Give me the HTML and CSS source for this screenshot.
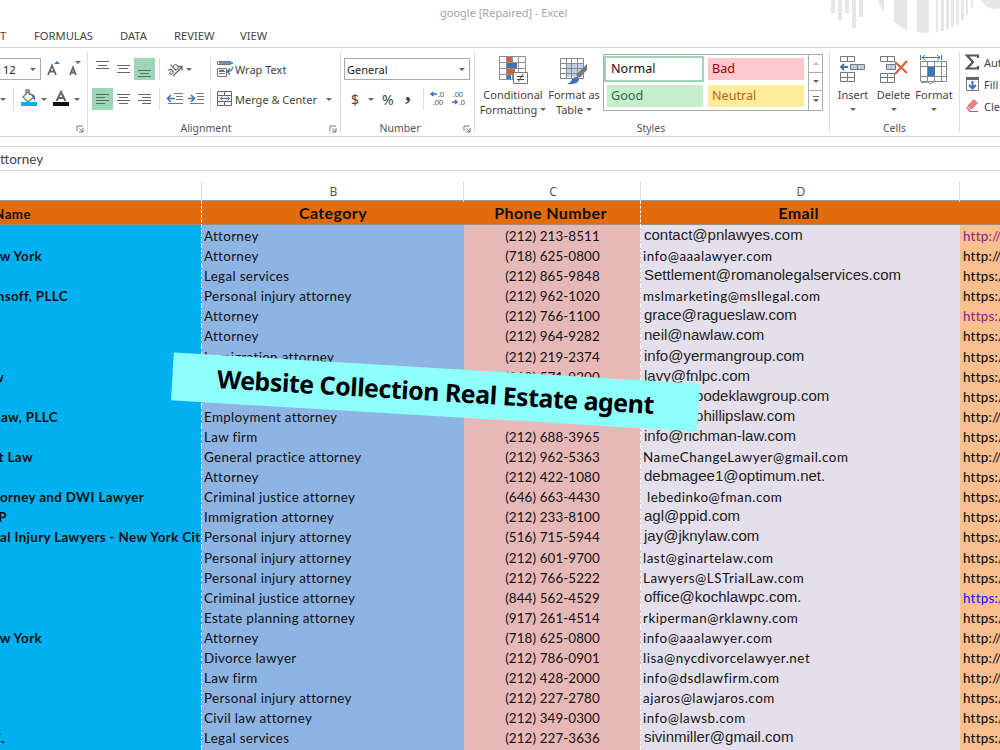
FILE: index.html
```
<!DOCTYPE html>
<html><head>
<meta charset="utf-8">
<title>google [Repaired] - Excel</title>
<link rel="stylesheet" href="styles.css">
</head><body>

<div class="titlebar">google [Repaired] - Excel
<svg class="deco" width="180" height="36"><g fill="#e6e6e6"><path d="M11 0h4v13h-4zM18 0h4v20h-4zM25 0h4v13h-4zM32 0h4v28h-4zM39 0h4v17h-4zM58 0h6v12q-4-5-6-12zM74 0h13v30q-7-3-13-8zM97 0h12v33q-6 0-12-1zM116 0h2v32h-2zM121 0h3v31h-3zM126 0h3v29h-3zM131 0h3v27h-3zM136 0h3v25h-3zM141 0h3v20h-3zM146 0h2v15h-2zM151 0h2v7h-2zM161 0h19v8q-12 4-19-8z"/></g></svg>
</div>
<div class="tabs"><span class="t0">T</span><span class="t1">FORMULAS</span><span class="t2">DATA</span><span class="t3">REVIEW</span><span class="t4">VIEW</span></div>

<div class="ribbon">
<div class="group font">
	<div class="row"><div class="size">12<i class="dd"></i></div>
	<svg width="36" height="22"><g fill="none" stroke="#666" stroke-width="1.8"><path d="M3 17L7 7.500L11 17M4.500 13.500h5"/><path d="M25 17L28 9.500L31 17M26 14.500h4"/></g><path d="M9 6l3-3 3 3zM30 3h6l-3 3z" fill="#3b74b9"/></svg></div>
	<div class="row"><i class="dd d1"></i><i class="sep"></i>
	<svg class="bucket" width="18" height="22"><path d="M3 9l5-5 6 5-6 5zM6 7V2h3v5" fill="none" stroke="#777" stroke-width="1.300"/><path d="M11 6q5 0 4 7l-2-3z" fill="#3b74b9"/><path d="M1 14h16v4H1z" fill="#00b0f0"/></svg><i class="dd d2"></i>
	<svg class="color" width="18" height="22"><path d="M4.500 13L9 4L13.500 13M6 10h6" fill="none" stroke="#666" stroke-width="2"/><path d="M1 14h16v4H1z" fill="#111"/></svg><i class="dd d3"></i></div>
	<div class="label"><svg class="launch" width="8" height="8"><path d="M1 6V1h6M3.500 3.500L7 7M7 3v4H3" fill="none" stroke="#777"/></svg></div>
</div>

<div class="group align">
	<div class="row">
	<svg width="64" height="22"><path d="M43 0h21v22H43z" fill="#9fd5b7"/><path d="M5 3.500h13M7 7.500h9M5 10.500h13M26 7.500h13M28 10.500h9M26 14.500h13M47 12.500h13M49 15.500h9M47 18.500h13" stroke="#666"/></svg>
	<i class="sep s1"></i>
	<svg class="rot" width="20" height="22"><text x="0" y="13" transform="rotate(-42 8 11)">ab</text><path d="M6 18L15 9M11 8.500h4v4" fill="none" stroke="#666" stroke-width="1.300"/></svg><i class="dd"></i>
	<i class="sep s2"></i>
	<svg class="ic" width="18" height="22"><path d="M.5 3.500h13v3H.5zM.5 10.500h9v8h-9zM2 13.500h6M2 15.500h6" stroke="#777" fill="none"/><path d="M2 5h14M2 12.500h5M15.500 9q0 4.500-5 4.500M13 10.500l-3 3 3 3" stroke="#3b74b9" fill="none" stroke-width="1.300"/></svg><span class="wrap">Wrap Text</span></div>
	<div class="row">
	<svg width="64" height="22"><path d="M1 0h21v22H1z" fill="#9fd5b7"/><path d="M5 6.500h13M5 9.500h9M5 12.500h13M5 15.500h9M26 6.500h13M28 9.500h9M26 12.500h13M28 15.500h9M47 6.500h13M51 9.500h9M47 12.500h13M51 15.500h9" stroke="#666"/></svg>
	<i class="sep s1"></i>
	<svg class="ind" width="40" height="22"><path d="M8 5.500h9M10 8.500h7M10 11.500h7M2 15.500h15M30 5.500h8M31 8.500h7M31 11.500h7M24 15.500h14" stroke="#777"/><path d="M1 10.500h8M5 7l-3.500 3.500L5 14M22 10.500h7M25 7l3.500 3.500L25 14" stroke="#3b74b9" stroke-width="1.600" fill="none"/></svg>
	<i class="sep s3"></i>
	<svg class="ic" width="18" height="22"><path d="M.5 3.500h14v14H.5zM.5 7.500h14M.5 13.500h14M7.500 3.500v4M7.500 13.500v4" stroke="#666" fill="none"/><path d="M3 10.500h10M5.500 8.500l-2 2 2 2M10.500 8.500l2 2-2 2" stroke="#3b74b9" fill="none"/></svg><span class="merge">Merge &amp; Center</span><i class="dd"></i></div>
	<div class="label">Alignment<svg class="launch" width="8" height="8"><path d="M1 6V1h6M3.500 3.500L7 7M7 3v4H3" fill="none" stroke="#777"/></svg></div>
</div>

<div class="group number">
	<div class="row"><div class="format">General<i class="dd"></i></div></div>
	<div class="row"><span class="cur">$</span><i class="dd"></i><span class="pct">%</span><span class="com">,</span><i class="sep"></i>
	<svg width="38" height="22" class="dec"><text x="9" y="9">.0</text><text x="4" y="17">.00</text><text x="24" y="9">.00</text><text x="30" y="17">.0</text><path d="M2 6h6M4.500 4L2 6l2.500 2M23 14h5M26 12l2 2-2 2" stroke="#3b74b9" stroke-width="1.500" fill="none"/></svg></div>
	<div class="label">Number<svg class="launch" width="8" height="8"><path d="M1 6V1h6M3.500 3.500L7 7M7 3v4H3" fill="none" stroke="#777"/></svg></div>
</div>

<div class="group styles">
	<div class="blocks">
	<div class="big cond"><svg width="30" height="30"><path d="M1.500 1.500h26v23h-26zM1.500 7.500h26M1.500 13.500h26M1.500 19.500h26M8.500 1v23M14.500 1v23M20.500 1v23" stroke="#909090" fill="none"/><path d="M9 2h5v5H9zM9 14h8v5H9z" fill="#dc5f3b"/><path d="M9 8h10v5H9zM9 20h4v4H9z" fill="#3b74b9"/><path d="M15.500 17.500h14v11h-14z" fill="#fff" stroke="#777"/><path d="M19 21.500h7M19 24.500h7M25 19l-5 8" stroke="#444"/></svg><span>Conditional</span><span>Formatting <i class="dd"></i></span></div>
	<div class="big fmt"><svg width="30" height="30"><path d="M8 8h17v14H8z" fill="#bdd0ea"/><path d="M1.500 3.500h23v20h-23zM1.500 8.500h23M1.500 13.500h23M1.500 18.500h23M7.500 3v20M12.500 3v20M18.500 3v20" stroke="#888" fill="none"/><path d="M28 9v6l-8 8-3-3z" fill="#777"/><path d="M8 29q4-1 5-5 5-4 7 0 0 6-12 5z" fill="#3b74b9"/></svg><span>Format as</span><span>Table <i class="dd"></i></span></div>
	<div class="gallery">
		<div class="swatches"><span class="normal">Normal</span><span class="bad">Bad</span><span class="good">Good</span><span class="neutral">Neutral</span></div>
		<div class="scroll"><span><i class="up"></i></span><span><i class="dd"></i></span><span><i class="dd more"></i></span></div>
	</div>
	</div>
	<div class="label">Styles</div>
</div>

<div class="group cells">
	<div class="blocks">
	<div class="big ins"><svg width="30" height="30"><path d="M13 9h13v6H13z" fill="#bdd0ea"/><path d="M2.500 1.500h14v5h-14zM9.500 1v5M12.500 9.500h14v5h-14zM19.500 9v6M2.500 17.500h14v9h-14zM2.500 22.500h14M9.500 17v10" stroke="#777" fill="none"/><path d="M3 12h7M6 9l-3 3 3 3" stroke="#3b74b9" stroke-width="1.800" fill="none"/></svg><span>Insert</span><i class="dd"></i></div>
	<div class="big del"><svg width="30" height="30"><path d="M8 9h9v5H8z" fill="#bdd0ea"/><path d="M1.500 1.500h14v5h-14zM8.500 1v5M7.500 9.500h9v5h-9zM1.500 18.500h14v9h-14zM1.500 22.500h14M8.500 18v9" stroke="#777" fill="none"/><path d="M16 7l12 11M28 6L16 19" stroke="#dc5f3b" stroke-width="2.200"/></svg><span>Delete</span><i class="dd"></i></div>
	<div class="big form"><svg width="30" height="30"><path d="M1.500 6.500h26v20h-26zM1.500 11.500h26M1.500 21.500h26M8.500 6v20M15.500 6v20M22.500 6v20" stroke="#888" fill="none"/><path d="M9 12h7v9H9z" fill="#3b74b9"/><path d="M2 28l7-1 2 2 6-3" stroke="#888" fill="none"/><path d="M1.500 0v5M22.500 0v5M3 2.500h18M6 0L3 2.500 6 5M18 0l3 2.500L18 5" stroke="#3b74b9" fill="none"/></svg><span>Format</span><i class="dd"></i></div>
	</div>
	<div class="label">Cells</div>
</div>

<div class="group edit">
	<div><svg width="20" height="20"><path d="M14 6V3.500H3l6 6.500-6 6.500h11V14" fill="none" stroke="#555" stroke-width="2.200"/></svg>AutoSum</div>
	<div><svg width="20" height="20"><path d="M2.500 3.500h12v13h-12z" fill="#fff" stroke="#777"/><path d="M2 3h13v3H2z" fill="#666"/><path d="M8.500 7v7M5 11l3.500 3.500L12 11" fill="none" stroke="#3b74b9" stroke-width="2"/></svg>Fill</div>
	<div><svg width="20" height="20"><path d="M2 11l8-8 4 4-8 8H4z" fill="#e98087"/><path d="M3 10l4 4" stroke="#fff"/><path d="M5 15.500h9" stroke="#777"/></svg>Clear</div>
</div>
</div>

<div class="formula">ttorney</div>

<div class="sheet">
<div class="cols"><span></span><span>B</span><span>C</span><span>D</span><span></span></div>
<div class="head"><span>Name</span><span>Category</span><span>Phone Number</span><span>Email</span><span></span></div>
<div class="line"><b></b><span>Attorney</span><span>(212) 213-8511</span><span class="ar">contact@pnlawyes.com</span><a class="seen">http://</a></div>
<div class="line"><b style="--end:42px">New York</b><span>Attorney</span><span>(718) 625-0800</span><span>info@aaalawyer.com</span><a>http://</a></div>
<div class="line"><b></b><span>Legal services</span><span>(212) 865-9848</span><span class="ar">Settlement@romanolegalservices.com</span><a>https://</a></div>
<div class="line"><b style="--end:68px">nsoff, PLLC</b><span>Personal injury attorney</span><span>(212) 962-1020</span><span>mslmarketing@msllegal.com</span><a>https://</a></div>
<div class="line"><b></b><span>Attorney</span><span>(212) 766-1100</span><span class="ar">grace@ragueslaw.com</span><a class="seen">https://</a></div>
<div class="line"><b></b><span>Attorney</span><span>(212) 964-9282</span><span class="ar">neil@nawlaw.com</span><a>https://</a></div>
<div class="line"><b></b><span>Immigration attorney</span><span>(212) 219-2374</span><span class="ar">info@yermangroup.com</span><a>https://</a></div>
<div class="line"><b style="--end:4px">Law</b><span>Attorney</span><span>(212) 571-9200</span><span class="ar">lavy@fnlpc.com</span><a>https://</a></div>
<div class="line"><b></b><span>Attorney</span><span></span><span class="ar">david@bodeklawgroup.com</span><a>https://</a></div>
<div class="line"><b style="--end:58px">Law, PLLC</b><span>Employment attorney</span><span></span><span class="ar">david@phillipslaw.com</span><a>http://</a></div>
<div class="line"><b></b><span>Law firm</span><span>(212) 688-3965</span><span class="ar">info@richman-law.com</span><a>https://</a></div>
<div class="line"><b style="--end:33px">at Law</b><span>General practice attorney</span><span>(212) 962-5363</span><span>NameChangeLawyer@gmail.com</span><a>http://</a></div>
<div class="line"><b></b><span>Attorney</span><span>(212) 422-1080</span><span class="ar">debmagee1@optimum.net.</span><a>https://</a></div>
<div class="line"><b style="--end:144px">Attorney and DWI Lawyer</b><span>Criminal justice attorney</span><span>(646) 663-4430</span><span>&nbsp;lebedinko@fman.com</span><a>https://</a></div>
<div class="line"><b style="--end:7px">LLP</b><span>Immigration attorney</span><span>(212) 233-8100</span><span class="ar">agl@ppid.com</span><a>https://</a></div>
<div class="line"><b class="long">al Injury Lawyers - New York City</b><span>Personal injury attorney</span><span>(516) 715-5944</span><span class="ar">jay@jknylaw.com</span><a>https://</a></div>
<div class="line"><b></b><span>Personal injury attorney</span><span>(212) 601-9700</span><span>last@ginartelaw.com</span><a>https://</a></div>
<div class="line"><b></b><span>Personal injury attorney</span><span>(212) 766-5222</span><span>Lawyers@LSTrialLaw.com</span><a>https://</a></div>
<div class="line"><b></b><span>Criminal justice attorney</span><span>(844) 562-4529</span><span class="ar">office@kochlawpc.com.</span><a class="link">https://</a></div>
<div class="line"><b></b><span>Estate planning attorney</span><span>(917) 261-4514</span><span>rkiperman@rklawny.com</span><a>https://</a></div>
<div class="line"><b style="--end:42px">New York</b><span>Attorney</span><span>(718) 625-0800</span><span>info@aaalawyer.com</span><a>http://</a></div>
<div class="line"><b></b><span>Divorce lawyer</span><span>(212) 786-0901</span><span>lisa@nycdivorcelawyer.net</span><a>http://</a></div>
<div class="line"><b></b><span>Law firm</span><span>(212) 428-2000</span><span>info@dsdlawfirm.com</span><a>http://</a></div>
<div class="line"><b></b><span>Personal injury attorney</span><span>(212) 227-2780</span><span>ajaros@lawjaros.com</span><a>https://</a></div>
<div class="line"><b></b><span>Civil law attorney</span><span>(212) 349-0300</span><span>info@lawsb.com</span><a>https://</a></div>
<div class="line"><b style="--end:5px">P.C.</b><span>Legal services</span><span>(212) 227-3636</span><span class="ar">sivinmiller@gmail.com</span><a>https://</a></div>
<div class="line"><b></b><span></span><span></span><span></span><a></a></div>
</div>

<div class="banner"><span>Website Collection Real Estate agent</span></div>
</body></html>
```
FILE: styles.css
```
*{box-sizing:border-box;}
body{margin:0;width:1000px;height:750px;overflow:hidden;background:#fff;color:#444;font:11px "Noto Sans","Open Sans",sans-serif;white-space:nowrap;}
svg{display:block;flex:none;}
i{display:block;flex:none;}

.titlebar{position:relative;height:24px;padding-left:440px;line-height:25px;font-size:11px;color:#a6a6a6;}
.deco{position:absolute;left:820px;top:0;}
.tabs{display:flex;height:24px;border-bottom:1px solid #d4d4d4;line-height:23px;font-size:11.2px;}
.tabs span{flex:none;}
.t0{width:34px;}
.t1{width:86px;}
.t2{width:54px;}
.t3{width:66px;}

.ribbon{display:flex;height:89px;border-bottom:1px solid #d4d4d4;}
.group{display:flex;flex-direction:column;flex:none;height:80px;margin-top:4px;border-right:1px solid #dcdcdc;}
.row{display:flex;align-items:center;height:22px;margin-top:6px;}
.row + .row{margin-top:8px;}
.label{position:relative;height:12px;margin-top:12px;line-height:13px;font-size:10.5px;text-align:center;color:#555;}
.launch{position:absolute;right:3px;top:3px;}
.sep{width:1px;height:22px;background:#dcdcdc;}
.dd{width:0;height:0;border:3px solid transparent;border-top-color:#666;border-bottom:0;}

.font{width:88px;}
.size{display:flex;align-items:center;justify-content:space-between;width:41px;height:22px;margin-right:4px;padding:0 4px 0 3px;border:1px solid #ababab;border-left:0;color:#222;}
.d1{margin-right:7px;}
.bucket{margin-left:6px;}
.d2{margin-left:3px;}
.color{margin-left:5px;}
.d3{margin-left:4px;}

.align{width:253px;padding-left:3px;}
.s1{margin-left:4px;}
.rot{margin-left:7px;fill:#555;}
.rot + .dd{margin-left:-1px;}
.s2{margin-left:18px;}
.ind{margin-left:6px;}
.s3{margin-left:4px;}
.ic{margin-left:6px;}
.merge{width:82px;}
.merge + .dd{margin-left:9px;}
.align .label{padding-right:19px;}

.number{width:134px;padding-left:3px;}
.format{display:flex;align-items:center;justify-content:space-between;width:126px;height:22px;padding:0 4px 0 2px;border:1px solid #ababab;color:#222;}
.cur{width:16px;padding-left:7px;margin-right:8px;font-size:14px;}
.pct{width:23px;margin-left:8px;font-size:14px;}
.com{width:18px;margin-top:-12px;line-height:10px;font-family:"Liberation Serif",serif;font-size:23px;font-weight:bold;}
.dec{margin-left:5px;font-size:7.5px;letter-spacing:-.3px;fill:#555;}
.number .label{padding-right:18px;}

.styles{width:355px;}
.blocks{display:flex;height:58px;}
.big{display:flex;flex-direction:column;align-items:center;flex:none;padding-top:3px;line-height:15px;}
.big svg{margin-bottom:2px;}
.big span{display:flex;align-items:center;}
.big span .dd{margin-left:3px;}
.cond{width:76px;}
.fmt{width:46px;}
.gallery{display:flex;width:220px;height:57px;margin:2px 0 0 6px;border:1px solid #ababab;}
.swatches{display:grid;grid-template-columns:96px 96px;grid-template-rows:22px 22px;gap:5px;padding:3px;width:204px;}
.swatches span{padding-left:4px;line-height:21px;font-size:12.6px;}
.swatches .normal{margin:-2px -1px -2px -3px;padding-left:5px;border:2px solid #9fd5b7;color:#111;}
.bad{background:#ffc7ce;color:#9c0006;}
.good{background:#c6efce;color:#2a6a45;}
.neutral{background:#ffeb9c;color:#b8651b;}
.scroll{width:14px;border-left:1px solid #ababab;}
.scroll span{display:flex;align-items:center;justify-content:center;height:18px;border-bottom:1px solid #ababab;}
.scroll span:last-child{border:0;}
.up{border:3px solid transparent;border-top:0;border-bottom-color:#bbb;}
.more{position:relative;}
.more:after{content:'';position:absolute;left:-3px;top:-6px;width:6px;height:1px;background:#666;}
.styles .label{padding-right:2px;}

.cells{width:130px;}
.cells .dd{margin-top:6px;}
.ins{width:46px;}
.del{width:35px;}
.form{width:46px;}
.edit{width:41px;margin-top:3px;padding-left:4px;border:0;}
.edit div{display:flex;align-items:center;height:22px;}

.formula{height:25px;margin-top:9px;border:1px solid #d4d4d4;border-width:1px 0;line-height:24px;font-family:Lato,sans-serif;font-size:13.5px;}

.sheet{margin-top:10px;font-family:Lato,sans-serif;font-size:13.4px;font-variant-ligatures:none;color:#111;}
.cols,.head,.line{display:grid;grid-template-columns:202px 262px 177px 319px 40px;}
.cols{height:20px;border-bottom:1px solid #9b9b9b;line-height:21px;font-family:"Noto Sans",sans-serif;font-size:12px;text-align:center;color:#555;}
.cols span{padding-left:2px;border-right:1px solid #dcdcdc;}
.cols span:last-child{border:0;}
.head{height:24px;border-bottom:1px solid #a08c78;background:#e26b0a;line-height:24px;font-size:16px;font-weight:bold;letter-spacing:.4px;text-align:center;}
.head span:first-child{padding-right:170px;direction:rtl;text-align:right;line-height:26px;font-size:13.4px;}
.head span:nth-child(3){padding-right:3px;}
.head span:nth-child(4){padding-right:4px;}
.line{height:20.1px;line-height:22px;}
.line > *{height:20.5px;overflow:hidden;}
.line b{display:flex;justify-content:flex-end;padding-right:calc(201px - var(--end,0px));background:#00b0f0;letter-spacing:.35px;}
.line b.long{justify-content:flex-start;padding-right:0;}
.line b + span{padding-left:2px;background:#8db4e2;letter-spacing:.33px;}
.line span:nth-child(3){padding-left:1px;background:#e6b8b7;letter-spacing:.1px;text-align:center;}
.line span:nth-child(4){padding-left:2px;background:#e4dfec;letter-spacing:.52px;}
.line span.ar{padding-left:3px;line-height:20.6px;letter-spacing:0;font-family:"Liberation Sans",Arial,sans-serif;font-size:15px;color:#222;}
.line a{padding-left:3px;background:#fabf8f;font-weight:500;letter-spacing:.2px;}
.line a.seen{color:#93278f;}
.line a.link{color:#1a1aff;}
.line b,.head span:first-child,.line span:nth-child(3),.head span:nth-child(3){border-right:1px dashed #fff;}

.banner{position:absolute;left:172px;top:368px;width:527px;height:48px;background:#8ffffb;transform:rotate(3.4deg);color:#000;font:bold 25px/47px "Noto Sans",sans-serif;letter-spacing:-.5px;text-align:center;}
```
